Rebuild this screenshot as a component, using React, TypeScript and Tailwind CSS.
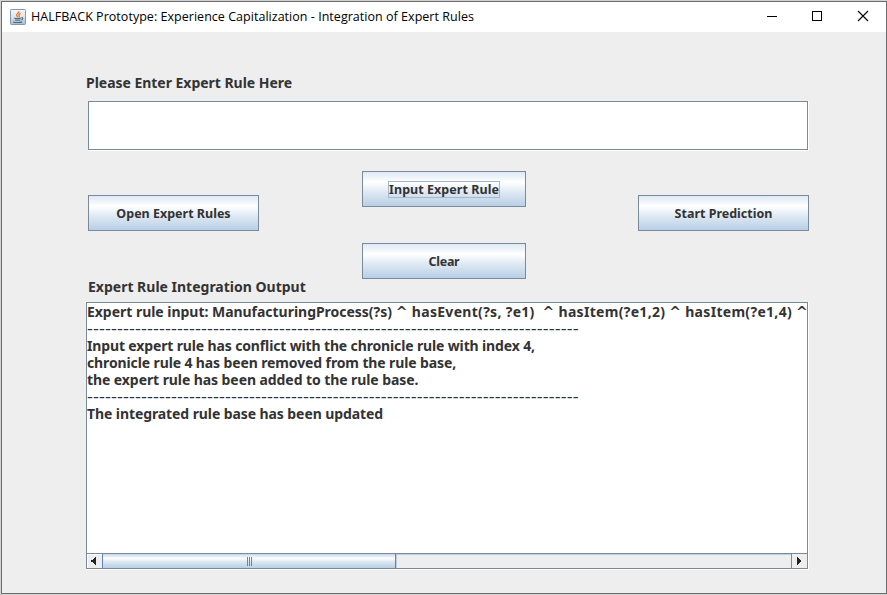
import type { ReactNode } from "react";

const dashes = "-".repeat(82);
const title = "HALFBACK Prototype: Experience Capitalization - Integration of Expert Rules";

function JavaIcon() {
  return (
    <svg width="16" height="16" viewBox="0 0 16 16" className="shrink-0">
      <defs>
        <linearGradient id="tile" x1="0" y1="0" x2="0" y2="1">
          <stop offset="0" stopColor="#f4f6f8" />
          <stop offset="0.5" stopColor="#dfe5ea" />
          <stop offset="1" stopColor="#a9bac8" />
        </linearGradient>
      </defs>
      <rect x="0.5" y="0.5" width="15" height="15" rx="0.8" fill="url(#tile)" stroke="#8299ad" />
      <path d="M8.9 2.2c.8 1.6-3.2 2.7-2.2 4.3.3.6 1 1.2 1.2 1.8M10.6 4.4c-1.4.6-2.3 1.3-1.5 2.2.5.7.2 1.2-.4 1.7" fill="none" stroke="#e8762c" strokeWidth="1.3" />
      <path d="M4.3 8.9c1.4.7 4.9.7 6.6 0M5 10.7c1.4.6 3.9.6 5.4 0M3.2 13c2.2.8 7 .8 9-.3M11.3 8.7c2-.5 2.1 1.6.1 2.2" fill="none" stroke="#456985" strokeWidth="1.1" />
    </svg>
  );
}

function MetalButton({ className, children }: { className: string; children: ReactNode }) {
  return (
    <button
      className={`flex h-9 items-center justify-center border border-[#7a8a99] bg-[linear-gradient(#dde8f3_0%,#ffffff_30%,#dde8f3_60%,#b8cfe5_100%)] pt-px text-[12.5px] leading-[16px] font-bold whitespace-nowrap ${className}`}
    >
      {children}
    </button>
  );
}

function Caret() {
  return <span className="font-['DejaVu_Sans'] text-[14px] leading-[10px]">^</span>;
}

function Dashes() {
  return (
    <div className="h-[17px] font-['DejaVu_Sans'] text-[16.5px] leading-[17px] font-normal tracking-[0.043px]">{dashes}</div>
  );
}

export default function App() {
  return (
    <div className="h-[595px] w-[887px] overflow-hidden bg-[#d2d2d2] pt-px pl-px font-['Noto_Sans',sans-serif] text-[#333]">
      <div className="flex h-[593px] w-[886px] flex-col border border-[#6b6e6e] bg-[#eeeeee]">
        <header className="flex h-[30px] shrink-0 items-center bg-white pl-2 text-black">
          <JavaIcon />
          <h1 className="ml-[5px] flex-1 pb-[2px] font-['Open_Sans',sans-serif] text-[12.5px] leading-[17px] tracking-[0.03px] whitespace-nowrap">
            {title}
          </h1>
          <svg width="120" height="30" viewBox="0 0 120 30" fill="none" stroke="black" shapeRendering="crispEdges">
            <path d="M1 14.5h10M46.5 9.5h9v9h-9z" />
            <path d="M92 9l10 10M102 9L92 19" shapeRendering="auto" strokeWidth="1.1" />
          </svg>
        </header>

        <main className="flex flex-col pt-[41px] pl-[84px]">
          <label className="h-5 text-[14px] leading-[20px] font-bold tracking-[-0.03px]">Please Enter Expert Rule Here</label>
          <div className="mt-[8px] ml-[2px] h-[50px] w-[721px] border-r border-b border-white">
            <div className="h-[49px] w-[720px] border border-[#7a8a99] bg-white" />
          </div>

          <div className="mt-5 ml-[2px] flex h-[108px] w-[721px] items-start justify-between">
            <MetalButton className="mt-6 w-[171px]">Open Expert Rules</MetalButton>
            <div className="-ml-[9px] flex w-[164px] flex-col gap-9">
              <MetalButton className="w-[164px]">
                <span className="h-[17px] w-[112px] border border-[#a3b8cc] text-center leading-[15px] tracking-[0.05px]">Input Expert Rule</span>
              </MetalButton>
              <MetalButton className="w-[164px] tracking-[-0.3px]">Clear</MetalButton>
            </div>
            <MetalButton className="mt-6 w-[171px]">Start Prediction</MetalButton>
          </div>

          <h2 className="-mt-[2px] ml-[2px] h-[20px] text-[14px] leading-[20px] font-bold">Expert Rule Integration Output</h2>

          <div className="mt-[5px] h-[268px] w-[723px] border-r border-b border-white">
            <section className="flex h-[267px] w-[722px] flex-col border border-[#7a8a99] bg-white">
              <div className="min-h-0 flex-1 overflow-hidden text-[14px] leading-[17px] font-bold whitespace-pre">
                <div className="h-[17px]">
                  <span className="tracking-[-0.03px]">{"Expert rule input: ManufacturingProcess(?s)"}</span>
                  <span className="tracking-[0.3px]">
                    {" "}<Caret />{" hasEvent(?s, ?e1)  "}<Caret />{" hasItem(?e1,2) "}<Caret />{" hasItem(?e1,4) "}<Caret />
                  </span>
                </div>
                <Dashes />
                <div className="tracking-[-0.14px]">Input expert rule has conflict with the chronicle rule with index 4,</div>
                <div className="tracking-[-0.12px]">chronicle rule 4 has been removed from the rule base,</div>
                <div className="tracking-[-0.08px]">the expert rule has been added to the rule base.</div>
                <Dashes />
                <div className="tracking-[-0.09px]">The integrated rule base has been updated</div>
              </div>
              <div className="flex h-[15px] shrink-0 border-t border-[#7a8a99] bg-[#eeeeee]">
                <div className="flex w-[15px] shrink-0 items-center border-t border-l border-white pb-px pl-[3px]">
                  <svg width="5" height="8" viewBox="0 0 5 8" shapeRendering="crispEdges"><path d="M4 0h1v8H4V7H3V6H2V5H1V3h1V2h1V1h1zM0 3h2v2H0z" fill="#222" /></svg>
                </div>
                <div className="flex w-[294px] shrink-0 items-center justify-center border-x border-[#6382bf] bg-[linear-gradient(#c4d5e8_0%,#ffffff_30%,#dde8f3_55%,#b8cfe5_100%)] pt-px">
                  <div className="flex h-[9px] gap-px">
                    <i className="w-px bg-[#6382bf]" /><i className="w-px bg-[#6382bf]" /><i className="w-px bg-[#6382bf]" />
                  </div>
                </div>
                <div className="flex-1 border-t border-l border-[#b8cfe5]" />
                <div className="flex w-[16px] shrink-0 items-center border-l border-[#7a8a99] pl-[5px]">
                  <svg width="5" height="8" viewBox="0 0 5 8" shapeRendering="crispEdges"><path d="M0 0h1v1h1v1h1v1h1v2H3v1H2v1H1v1H0z" fill="#222" /></svg>
                </div>
              </div>
            </section>
          </div>
        </main>
      </div>
    </div>
  );
}
